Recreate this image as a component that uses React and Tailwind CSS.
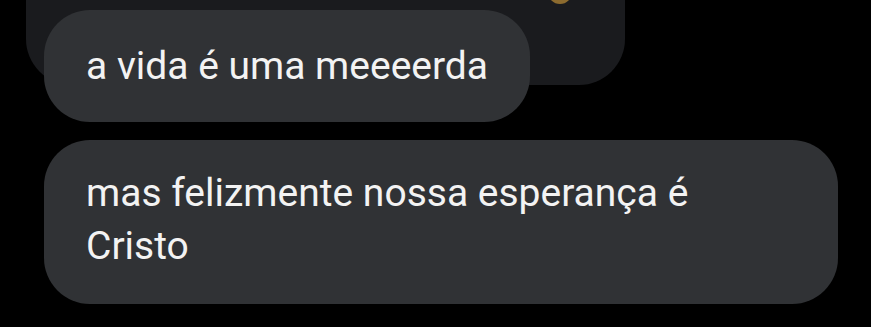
import React from 'react'

const Bubble = ({ className, children }) => (
  <div className={`bg-[#303235] text-[#f3f3f3] text-[39px] leading-[53px] ${className}`}>
    {children}
  </div>
)

const App = () => {
  return (
    <div className="w-[871px] h-[327px] bg-black overflow-hidden font-['Roboto',sans-serif]">
      {/* earlier message, cut off by the top of the screen */}
      <div className="relative ml-[26px] w-[599px] h-[85px] bg-[#1a1b1e] rounded-b-[46px]">
        <div className="absolute left-[522px] top-[-20px] w-[24px] h-[24px] rounded-full bg-[#d9a13a] opacity-60"></div>
      </div>

      <Bubble className="relative -mt-[75px] ml-[44px] w-[486px] h-[112px] rounded-[46px] flex items-center pl-[42px]">
        a vida é uma meeeerda
      </Bubble>

      <Bubble className="mt-[18px] ml-[44px] w-[794px] h-[164px] rounded-[46px] pl-[42px] pr-[60px] pt-[27px]">
        mas felizmente nossa esperança é Cristo
      </Bubble>
    </div>
  )
}

export default App
